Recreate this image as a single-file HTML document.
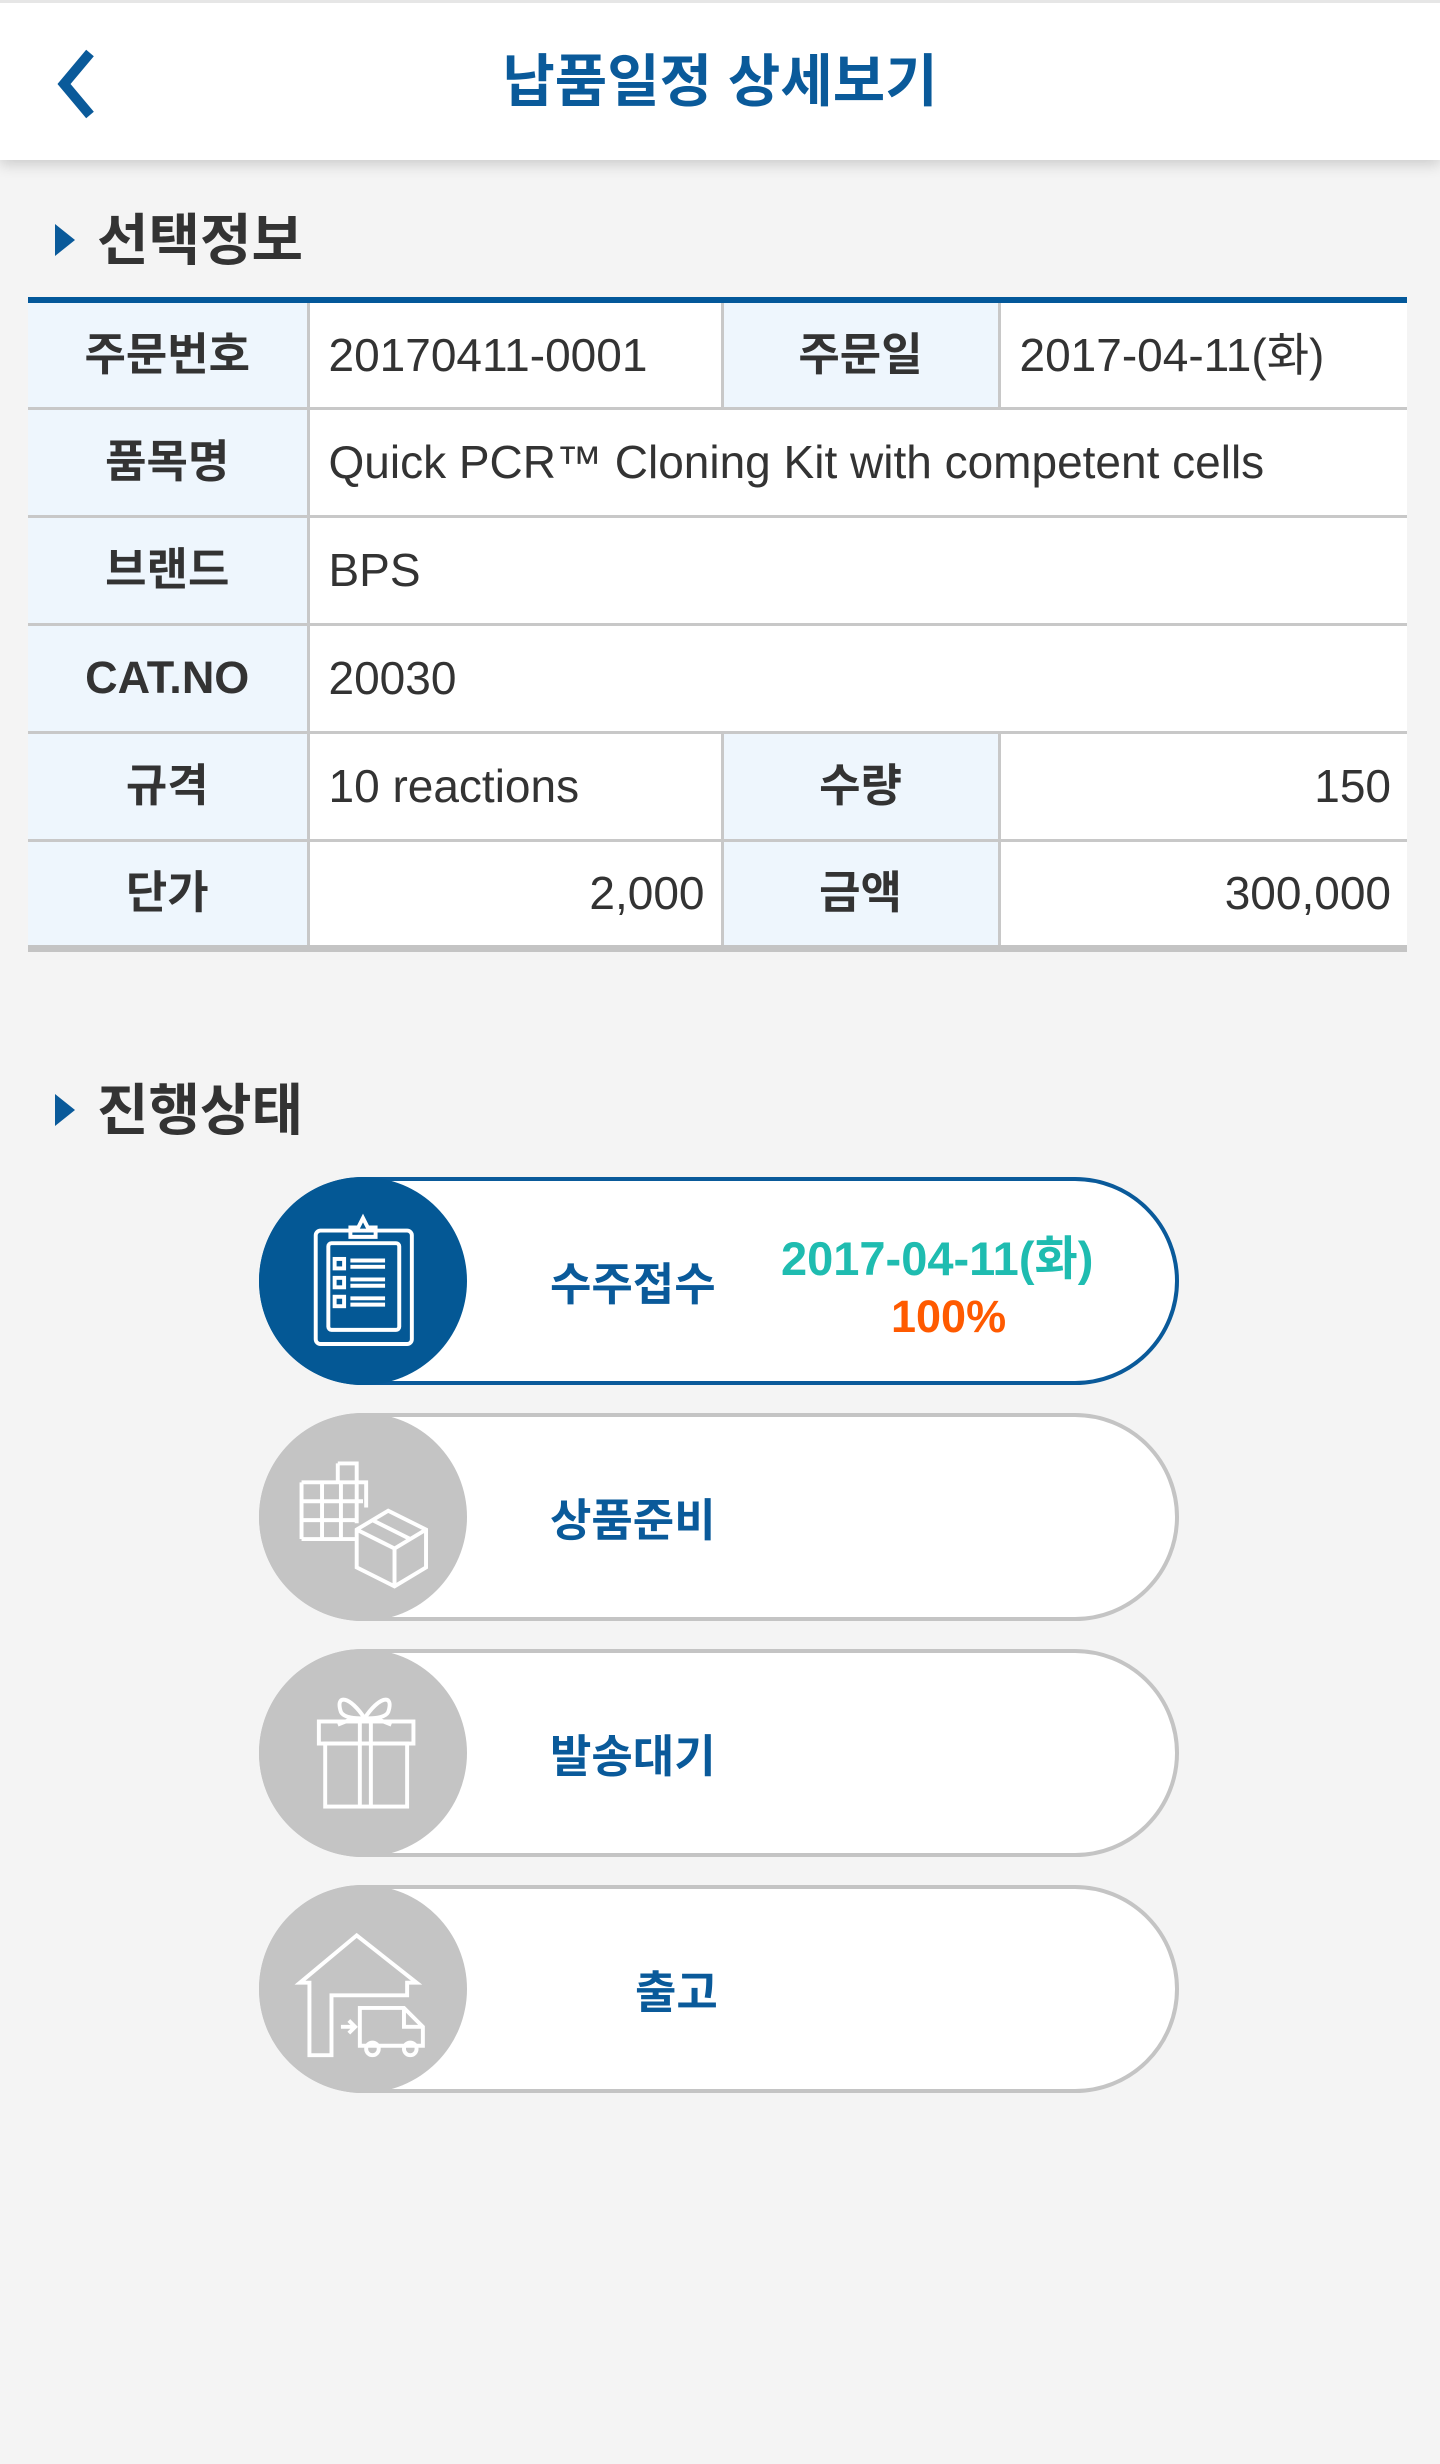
<!DOCTYPE html>
<html><head><meta charset="utf-8"><style>
*{margin:0;padding:0;box-sizing:border-box}
body{width:1440px;height:2464px;background:#f4f4f4;font-family:"Liberation Sans","Noto Sans CJK KR",sans-serif;position:relative;overflow:hidden}
.hdr{position:absolute;left:0;top:0;width:1440px;height:160px;background:#fff;box-shadow:0 4px 14px rgba(0,0,0,.18);border-top:3px solid #e6e6e6}
.hdr h1{position:absolute;left:0;right:0;top:46px;text-align:center;font-size:57px;font-weight:bold;color:#0a5a9a;line-height:66px}
.sec{position:absolute;left:55px;font-size:56px;font-weight:bold;color:#333;line-height:62px}
.sec:before{content:"";display:inline-block;width:0;height:0;border-top:16px solid transparent;border-bottom:16px solid transparent;border-left:20px solid #0a5a9a;margin-right:22px;vertical-align:4px}
table{position:absolute;left:28px;top:297px;width:1379px;border-collapse:collapse;border-top:6px solid #03589a;border-bottom:7px solid #c4c4c4;background:#fff;table-layout:fixed}
td{border:3px solid #c8c8c8;height:108px;font-size:46px;line-height:54px;color:#333;padding:0 16px 0 19px;white-space:nowrap}
tr:first-child td{border-top:none}
td:first-child{border-left:none}td:last-child{border-right:none}
td.l{background:#eef6fd;text-align:center;font-weight:bold;padding:0;font-size:45px}
td.r{text-align:right}
.pill{position:absolute;left:259px;width:920px;height:208px;border:4px solid #c4c4c4;border-radius:104px;background:#fff}
.pill.on{border-color:#0a5a9a}
.circ{position:absolute;left:-4px;top:-4px;width:208px;height:208px;border-radius:50%;background:#c4c4c4}
.on .circ{background:#045895}
.circ svg{width:208px;height:208px}
.t{position:absolute;font-size:45px;font-weight:bold;color:#0a5a9a;line-height:50px;white-space:nowrap}
</style></head><body>
<div class="hdr">
<svg style="position:absolute;left:50px;top:44px" width="50" height="74" viewBox="0 0 50 74"><path d="M40 6 L14 37 L40 68" fill="none" stroke="#0a5a9a" stroke-width="10"/></svg>
<h1>납품일정 상세보기</h1></div>

<div class="sec" style="top:210px">선택정보</div>
<table>
<colgroup><col style="width:280px"><col style="width:414px"><col style="width:277px"><col></colgroup>
<tr><td class="l">주문번호</td><td>20170411-0001</td><td class="l">주문일</td><td>2017-04-11(화)</td></tr>
<tr><td class="l">품목명</td><td colspan="3">Quick PCR™ Cloning Kit with competent cells</td></tr>
<tr><td class="l">브랜드</td><td colspan="3">BPS</td></tr>
<tr><td class="l">CAT.NO</td><td colspan="3">20030</td></tr>
<tr><td class="l">규격</td><td>10 reactions</td><td class="l">수량</td><td class="r">150</td></tr>
<tr><td class="l">단가</td><td class="r">2,000</td><td class="l">금액</td><td class="r">300,000</td></tr>
</table>

<div class="sec" style="top:1080px">진행상태</div>

<div class="pill on" style="top:1177px"><div class="circ"><svg viewBox="0 0 132 132" fill="none" stroke="#fff" stroke-width="2.5">
<rect x="36" y="34" width="61" height="72" rx="3"/><rect x="44" y="42" width="45" height="55" rx="2"/>
<path d="M58 38 V32 H63 L66 26 L69 32 H74 V38 Z"/>
<rect x="48" y="52" width="6" height="6"/><rect x="48" y="64" width="6" height="6"/><rect x="48" y="76" width="6" height="6"/>
<path d="M58 53 H80 M58 57 H80 M58 65 H80 M58 69 H80 M58 77 H80 M58 81 H80"/></svg></div>
<div class="t" style="left:287px;top:79px">수주접수</div>
<div class="t" style="left:518px;top:53px;color:#1fbcb0;font-size:47px">2017-04-11(화)</div>
<div class="t" style="left:628px;top:111px;color:#ff5a00">100%</div></div>

<div class="pill" style="top:1413px"><div class="circ"><svg viewBox="0 0 132 132" fill="none" stroke="#fff" stroke-width="2.5">
<path d="M27 44 H68 M27 56 H66 M27 68 H62 M27 80 H62 M27 44 V80 M40 44 V80 M52 44 V80 M50 32 H62 V70 M50 32 V44 M62 44 H68 V60"/>
<path d="M62 74 L82 62 L106 74 L106 98 L86 110 L62 98 Z M62 74 L86 86 L106 74 M86 86 V110 M72 68 L96 80"/></svg></div>
<div class="t" style="left:287px;top:79px">상품준비</div></div>

<div class="pill" style="top:1649px"><div class="circ"><svg viewBox="0 0 132 132" fill="none" stroke="#fff" stroke-width="2.5">
<rect x="38" y="46" width="60" height="14"/><rect x="42" y="60" width="52" height="40"/>
<path d="M64 46 V100 M71 46 V100 M67 44 C58 30 48 28 52 40 C54 44 62 44 67 44 C76 30 86 28 82 40 C80 44 72 44 67 44 M60 44 L50 48 M74 44 L84 48"/></svg></div>
<div class="t" style="left:287px;top:79px">발송대기</div></div>

<div class="pill" style="top:1885px"><div class="circ"><svg viewBox="0 0 132 132" fill="none" stroke="#fff" stroke-width="2.5">
<path d="M32 108 V62 H26 L62 32 L100 62 H94 V70 H46 V108 Z"/>
<path d="M52 90 H60 M57 86 L61 90 L57 94"/>
<path d="M64 78 H92 L104 90 V102 H64 Z M92 78 V90 H104"/>
<circle cx="72" cy="104" r="4"/><circle cx="96" cy="104" r="4"/></svg></div>
<div class="t" style="left:372px;top:79px">출고</div></div>
</body></html>
